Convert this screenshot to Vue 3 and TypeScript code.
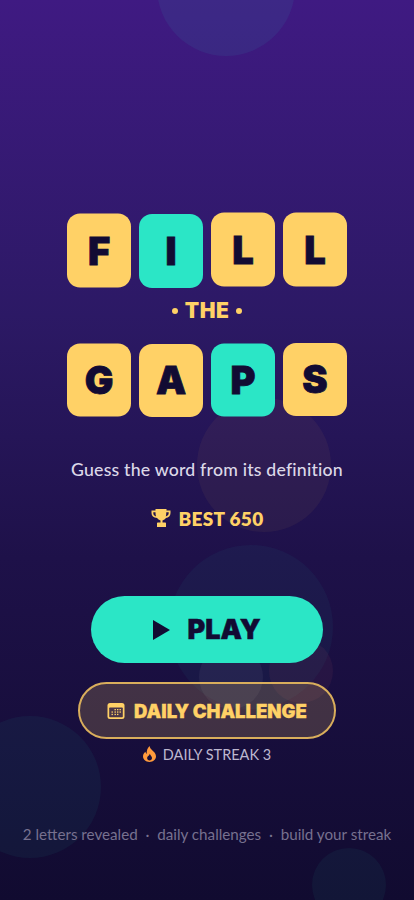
<script setup lang="ts">
interface Tile { ch: string; teal?: boolean; dy: number }
const fill: Tile[] = [
  { ch: 'F', dy: 0.5 },
  { ch: 'I', teal: true, dy: 1 },
  { ch: 'L', dy: -0.5 },
  { ch: 'L', dy: -0.5 },
]
const gaps: Tile[] = [
  { ch: 'G', dy: 0.5 },
  { ch: 'A', dy: 1 },
  { ch: 'P', teal: true, dy: 0.5 },
  { ch: 'S', dy: 0 },
]
const bubbles = [
  { x: 226, y: -13, r: 69, c: 'rgba(43,230,198,0.07)' },
  { x: 263.5, y: 465, r: 67, c: 'rgba(255,190,70,0.05)' },
  { x: 251, y: 627, r: 82, c: 'rgba(43,230,198,0.045)' },
  { x: 231, y: 677, r: 32, c: 'rgba(255,255,255,0.05)' },
  { x: 301, y: 671, r: 32, c: 'rgba(255,120,120,0.06)' },
  { x: 30, y: 787, r: 71, c: 'rgba(43,230,198,0.05)' },
  { x: 349, y: 885, r: 37, c: 'rgba(43,230,198,0.05)' },
]
function bubbleStyle(b: { x: number; y: number; r: number; c: string }) {
  return { left: `${b.x - b.r}px`, top: `${b.y - b.r}px`, width: `${b.r * 2}px`, height: `${b.r * 2}px`, background: b.c }
}
</script>

<template>
  <main class="screen">
    <span v-for="(b, i) in bubbles" :key="i" class="bubble" :style="bubbleStyle(b)"></span>

    <div class="logo">
      <div class="row">
        <div v-for="(t, i) in fill" :key="i" class="tile" :class="{ teal: t.teal }" :style="{ transform: `translateY(${t.dy}px)` }">{{ t.ch }}</div>
      </div>
      <div class="the"><i></i><span>THE</span><i></i></div>
      <div class="row">
        <div v-for="(t, i) in gaps" :key="i" class="tile" :class="{ teal: t.teal }" :style="{ transform: `translateY(${t.dy}px)` }">{{ t.ch }}</div>
      </div>
    </div>

    <p class="tagline">Guess the word from its definition</p>

    <div class="best">
      <svg width="20" height="20" viewBox="0 0 20 20" aria-hidden="true">
        <path d="M4.500 1h11v1.500h4v2.600c0 2.800-1.900 4.700-4.700 5-.8 1.300-1.900 2.100-3.300 2.400v2h2.500c.6 0 1 .4 1 1V19h-9v-3.500c0-.6.4-1 1-1h2.500v-2c-1.400-.3-2.500-1.100-3.300-2.400C2.400 9.800.5 7.900.5 5.100V2.500h4V1zm-2.200 3.200v.9c0 1.700.9 2.900 2.700 3.300-.3-1.300-.5-2.700-.5-4.200H2.300zm13 0c0 1.500-.2 2.900-.5 4.200 1.800-.4 2.900-1.600 2.900-3.300v-.9h-2.400z" fill="#ffd166" />
      </svg>
      <span>BEST 650</span>
    </div>

    <button class="play" type="button">
      <svg width="17" height="20" viewBox="0 0 17 20" aria-hidden="true"><path d="M0 0l17 10L0 20z" fill="#120b33" /></svg>
      <span>PLAY</span>
    </button>

    <button class="daily" type="button">
      <svg width="18" height="18" viewBox="0 0 18 18" aria-hidden="true">
        <rect x="0.500" y="1" width="17" height="16" rx="2.500" fill="#ffd166" />
        <rect x="2.200" y="5.500" width="13.600" height="9.800" rx="0.800" fill="#4a3648" />
        <g fill="#ffd166">
          <rect x="7.500" y="7" width="1.400" height="1.300" /><rect x="10" y="7" width="1.400" height="1.300" /><rect x="12.500" y="7" width="1.400" height="1.300" />
          <rect x="4.500" y="9.400" width="1.400" height="1.300" /><rect x="7.500" y="9.400" width="1.400" height="1.300" /><rect x="10" y="9.400" width="1.400" height="1.300" /><rect x="12.500" y="9.400" width="1.400" height="1.300" />
          <rect x="4.500" y="11.800" width="1.400" height="1.300" /><rect x="7.500" y="11.800" width="1.400" height="1.300" /><rect x="10" y="11.800" width="1.400" height="1.300" />
        </g>
      </svg>
      <span>DAILY CHALLENGE</span>
    </button>

    <div class="streak">
      <svg width="13" height="16" viewBox="0 0 13 16" aria-hidden="true">
        <path fill-rule="evenodd" d="M6.500 0c.5 2 1.400 3 2.700 4.200C10.900 5.700 13 7.500 13 10.300 13 13.600 10.200 16 6.500 16S0 13.600 0 10.300c0-2 1-3.500 2.400-4.600.2 1 .6 1.700 1.300 2.200C3.500 4.800 4.400 2 6.500 0zm.3 7.700c-.3 1.200-1 1.700-1.700 2.400-.6.600-1 1.200-1 2 0 1.400 1.100 2.300 2.400 2.300 1.400 0 2.500-.9 2.500-2.400 0-1.700-1.500-2.600-2.200-4.300z" fill="#ff9a3c" />
      </svg>
      <span>DAILY STREAK 3</span>
    </div>

    <p class="foot">2 letters revealed &nbsp;·&nbsp; daily challenges &nbsp;·&nbsp; build your streak</p>
  </main>
</template>

<style>
html, body { margin: 0; background: #120b33; }
</style>

<style scoped>
.screen {
  position: relative;
  width: 414px;
  height: 900px;
  overflow: hidden;
  display: flex;
  flex-direction: column;
  align-items: center;
  padding-top: 213px;
  box-sizing: border-box;
  background: linear-gradient(180deg, #3f1a82 0%, #2c1965 35%, #1e1149 62%, #110b30 100%);
  font-family: Lato, "Noto Sans", sans-serif;
}
.bubble { position: absolute; border-radius: 50%; }
.logo, .tagline, .best, .play, .daily, .streak, .foot { position: relative; }
.logo { display: flex; flex-direction: column; align-items: center; }
.row { display: flex; gap: 8px; }
.tile {
  width: 64px;
  height: 73.500px;
  border-radius: 13px;
  background: #ffd166;
  color: #120b33;
  display: flex;
  align-items: center;
  justify-content: center;
  font-family: Inter, sans-serif;
  font-weight: 900;
  font-size: 38px;
  line-height: 1;
  -webkit-text-stroke: 0.8px #120b33;
}
.tile.teal { background: #2be6c6; }
.the {
  height: 56px;
  padding-bottom: 8px;
  box-sizing: border-box;
  display: flex;
  align-items: center;
  justify-content: center;
  gap: 7px;
  color: #ffd166;
  font-family: Inter, sans-serif;
  font-weight: 900;
  font-size: 21px;
  letter-spacing: 0.5px;
}
.the i { width: 6px; height: 6px; border-radius: 50%; background: #ffd166; }
.tagline {
  margin: 42px 0 0;
  color: #dcd8e8;
  font-size: 17.700px;
  line-height: 24px;
  letter-spacing: 0.2px;
  font-weight: 500;
}
.best {
  margin-top: 24px;
  height: 24px;
  display: flex;
  align-items: center;
  gap: 8px;
  color: #ffd166;
  font-weight: 800;
  font-size: 19px;
  letter-spacing: 0.3px;
}
.play {
  margin-top: 66px;
  width: 232px;
  height: 67px;
  border: 0;
  border-radius: 34px;
  background: #2be6c6;
  color: #120b33;
  display: flex;
  align-items: center;
  justify-content: center;
  gap: 17px;
  font: 900 27px Inter, sans-serif;
  -webkit-text-stroke: 0.5px #120b33;
  letter-spacing: 0;
  padding: 0;
}
.daily {
  margin-top: 19px;
  width: 258px;
  height: 57px;
  box-sizing: border-box;
  border: 2px solid #d9ae5c;
  border-radius: 29px;
  background: rgba(255, 209, 102, 0.18);
  color: #ffd166;
  display: flex;
  align-items: center;
  justify-content: center;
  gap: 9px;
  font: 900 18.500px Inter, sans-serif;
  -webkit-text-stroke: 0.3px #ffd166;
  letter-spacing: 0;
  padding: 0;
}
.streak {
  margin-top: 5px;
  height: 20px;
  display: flex;
  align-items: center;
  gap: 7px;
  color: #bdb7cf;
  font-size: 14.500px;
}
.foot {
  position: absolute;
  left: 0;
  right: 0;
  bottom: 56px;
  margin: 0;
  text-align: center;
  color: #77718f;
  font-size: 15.200px;
  line-height: 20px;
  white-space: nowrap;
}
</style>
